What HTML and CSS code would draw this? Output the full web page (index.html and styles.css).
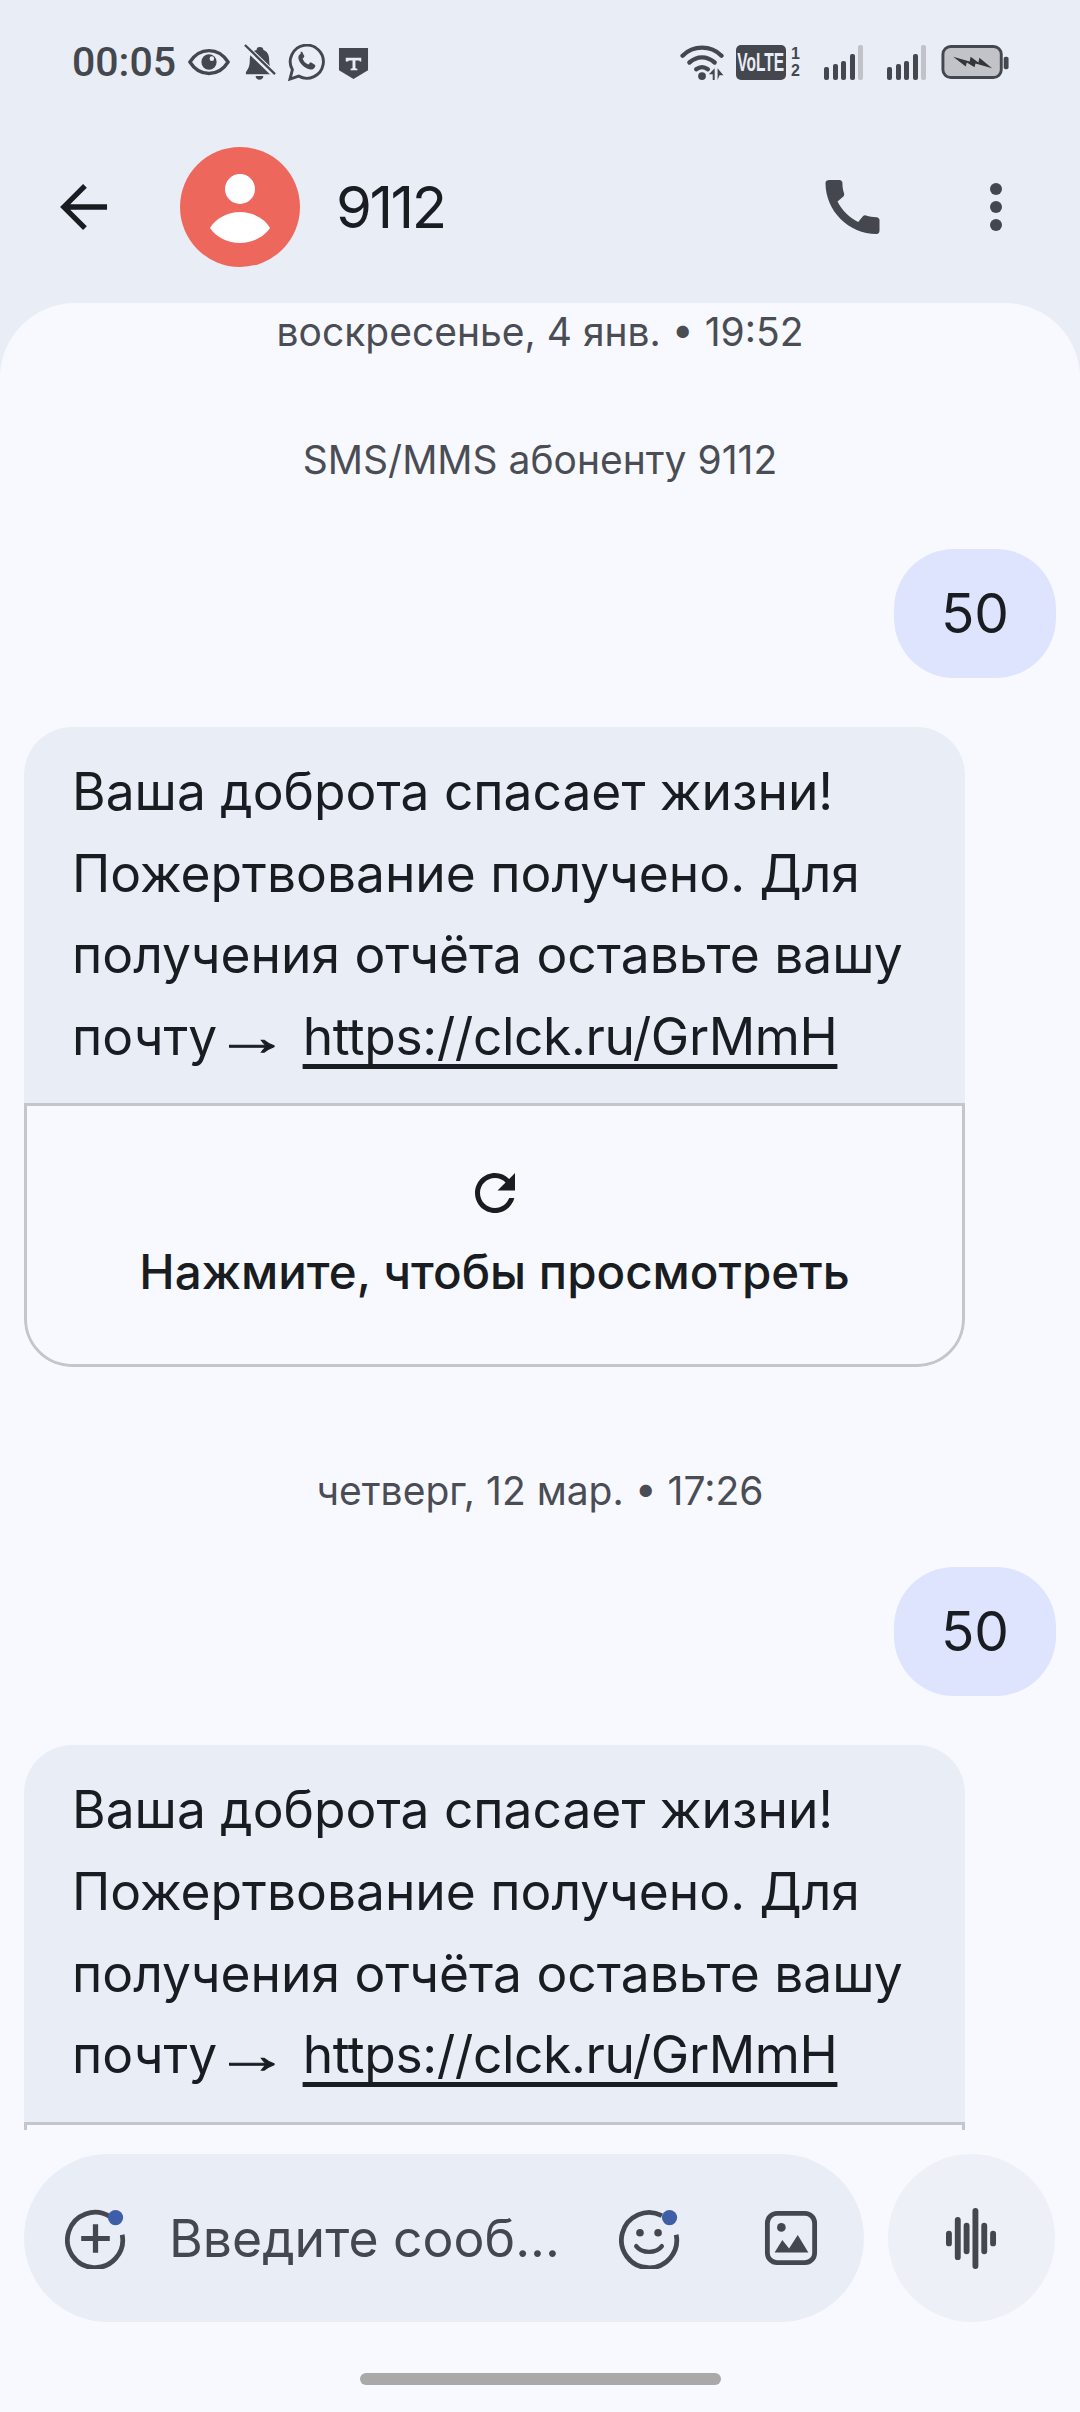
FILE: index.html
```html
<!DOCTYPE html>
<html lang="ru">
<head>
    <meta charset="UTF-8"/>
    <meta name="viewport" content="width=device-width, initial-scale=1.0"/>
    <title>9112</title>
    <link rel="stylesheet" href="styles.css">
</head>
<body>
    <div class="status">
        <span class="time">00:05</span>
        <svg class="st-eye" viewBox="0 0 44 28"><path d="M2 14C7 6 14 2 22 2s15 4 20 12c-5 8-12 12-20 12S7 22 2 14z" fill="none" stroke="#44474e" stroke-width="3.5"/><circle cx="22" cy="14" r="8" fill="#44474e"/><circle cx="25" cy="10.5" r="2.4" fill="#e9edf6"/></svg>
        <svg class="st-bell" viewBox="0 0 34 38"><path d="M17 3c-2 0-3 1-3 3C8 8 7 12 7 17c0 5-1 8-4 12v2h28v-2c-3-4-4-7-4-12 0-5-1-9-6-11 0-2-1-3-4-3z" fill="#44474e"/><path d="M13 33h8c0 5-8 5-8 0z" fill="#44474e"/><path d="M1 1l32 31" stroke="#e9edf6" stroke-width="6"/><path d="M2 1l31 30" stroke="#44474e" stroke-width="2.4"/></svg>
        <svg class="st-wa" viewBox="0 0 38 38"><path d="M2 36l2.5-9.5A17 17 0 1 1 11 33z" fill="none" stroke="#44474e" stroke-width="3"/><path d="M13 10c-2 1-3 3-2 6 1 4 6 9 11 10 3 1 5-1 6-3 0-1 0-2-1-2l-3-2c-1 0-2 0-2 1l-1 1c-3-1-5-3-6-6l1-1c1-1 1-2 0-3l-1-2c0-1-1-1-2-1z" fill="#44474e"/></svg>
        <svg class="st-shield" viewBox="0 0 32 34"><path d="M1 1h30v23L16 33 1 24z" fill="#44474e"/><path d="M8 11h16v4h-1.500l-.5-1h-4v8l2 .5V24h-7v-1.500l2-.5v-8h-4l-.5 1H8z" fill="#e9edf6"/></svg>
        <span class="status-gap"></span>
        <svg class="st-wifi" viewBox="0 0 46 36"><path d="M2 11C13 0 31 0 42 11" fill="none" stroke="#44474e" stroke-width="4.500" stroke-linecap="round"/><path d="M9 18c8-7 18-7 26 0" fill="none" stroke="#44474e" stroke-width="4.500" stroke-linecap="round"/><path d="M16 25c4-3 8-3 12 0" fill="none" stroke="#44474e" stroke-width="4.500" stroke-linecap="round"/><circle cx="22" cy="32" r="4" fill="#44474e"/><path d="M35 24v12h-2v-6h-4zM38 36V24l6 7h-4z" fill="#44474e"/></svg>
        <span class="volte"><span>VoLTE</span></span>
        <span class="sims"><span>1</span><span>2</span></span>
        <div class="signal"><i class="b1"></i><i class="b2"></i><i class="b3"></i><i class="b4"></i><i class="b5"></i></div>
        <div class="signal"><i class="b1"></i><i class="b2"></i><i class="b3"></i><i class="b4"></i><i class="b5"></i></div>
        <svg class="st-batt" viewBox="0 0 70 36"><rect x="1.500" y="1.500" width="60" height="32" rx="8" fill="#c1c3c8" stroke="#44474e" stroke-width="3"/><rect x="64" y="12" width="5" height="13" rx="2" fill="#44474e"/><path d="M12 12l17 5 1-5 8 6 1-5 13 11-17-5-1 4-8-5-1 4z" fill="#33353a"/></svg>
    </div>

    <div class="toolbar">
        <svg class="back" viewBox="0 0 50 50"><path d="M49 25H5M26 3L4 25l22 22" fill="none" stroke="#191c20" stroke-width="5.500"/></svg>
        <svg class="avatar" viewBox="0 0 120 120"><circle cx="60" cy="60" r="60" fill="#ee675c"/><circle cx="60" cy="42" r="15" fill="#fff"/><path d="M30 81c5-9 17-16 30-16s25 7 30 16c-6 9-18 15-30 15s-24-6-30-15z" fill="#fff"/></svg>
        <span class="contact">9112</span>
        <svg class="phone" viewBox="3 3 18 18"><path d="M20.01 15.38c-1.23 0-2.42-.2-3.53-.56-.35-.12-.74-.03-1.01.24l-1.57 1.97c-2.83-1.35-5.48-3.9-6.89-6.83l1.95-1.66c.27-.28.35-.67.24-1.02-.37-1.11-.56-2.3-.56-3.53 0-.54-.45-.99-.99-.99H4.19C3.65 3 3 3.24 3 3.99 3 13.28 10.73 21 20.01 21c.71 0 .99-.63.99-1.18v-3.45c0-.54-.45-.99-.99-.99z" fill="#44474e"/></svg>
        <div class="dots"><i></i><i></i><i></i></div>
    </div>

    <div class="panel">
        <div class="thread">
            <div class="stamp stamp-first">воскресенье, 4 янв. • 19:52</div>
            <div class="stamp stamp-sms">SMS/MMS абоненту 9112</div>
            <div class="sent">50</div>
            <div class="received">
                <div class="text">Ваша доброта спасает жизни! Пожертвование получено. Для получения отчёта оставьте вашу почту <span class="arrow">→</span> <u>https://clck.ru/GrMmH</u></div>
                <div class="preview">
                    <svg class="reload" viewBox="0 0 24 24"><path d="M17.65 6.35C16.2 4.9 14.21 4 12 4c-4.42 0-7.99 3.58-7.99 8s3.57 8 7.99 8c3.73 0 6.84-2.55 7.73-6h-2.08c-.82 2.33-3.04 4-5.65 4-3.31 0-6-2.69-6-6s2.69-6 6-6c1.66 0 3.14.69 4.22 1.78L13 11h7V4l-2.35 2.35z" fill="#191c20"/></svg>
                    <span>Нажмите, чтобы просмотреть</span>
                </div>
            </div>
            <div class="stamp stamp-next">четверг, 12 мар. • 17:26</div>
            <div class="sent">50</div>
            <div class="received">
                <div class="text">Ваша доброта спасает жизни! Пожертвование получено. Для получения отчёта оставьте вашу почту <span class="arrow">→</span> <u>https://clck.ru/GrMmH</u></div>
                <div class="preview">
                    <svg class="reload" viewBox="0 0 24 24"><path d="M17.65 6.35C16.2 4.9 14.21 4 12 4c-4.42 0-7.99 3.58-7.99 8s3.57 8 7.99 8c3.73 0 6.84-2.55 7.73-6h-2.08c-.82 2.33-3.04 4-5.65 4-3.31 0-6-2.69-6-6s2.69-6 6-6c1.66 0 3.14.69 4.22 1.78L13 11h7V4l-2.35 2.35z" fill="#191c20"/></svg>
                    <span>Нажмите, чтобы просмотреть</span>
                </div>
            </div>
        </div>

        <div class="composer">
            <div class="input">
                <svg class="ic-plus" viewBox="0 0 64 64"><path d="M47 9A29 29 0 1 0 60 28" fill="none" stroke="#44474e" stroke-width="5"/><path d="M32 17v30M17 32h30" stroke="#44474e" stroke-width="5.500"/><circle cx="53" cy="10" r="8" fill="#3f5ea8"/></svg>
                <span class="placeholder">Введите сооб...</span>
                <svg class="ic-smile" viewBox="0 0 64 64"><path d="M45 8A29 29 0 1 0 60 28" fill="none" stroke="#44474e" stroke-width="5"/><circle cx="22" cy="26" r="4" fill="#44474e"/><circle cx="41" cy="26" r="4" fill="#44474e"/><path d="M18 40c6 8 21 8 27 0" fill="none" stroke="#44474e" stroke-width="4.500" stroke-linecap="round"/><circle cx="53" cy="10" r="8" fill="#3f5ea8"/></svg>
                <svg class="ic-image" viewBox="0 0 54 56"><rect x="2.500" y="2.500" width="49" height="51" rx="10" fill="none" stroke="#44474e" stroke-width="5"/><circle cx="17" cy="17" r="4.500" fill="#44474e"/><path d="M10 43l8-13 7 9 9-14 11 18z" fill="#44474e"/></svg>
            </div>
            <div class="mic">
                <svg class="ic-wave" viewBox="0 0 52 62"><path d="M3 26v10M12 12v38M21 18v26M30 3v56M39 18v26M48 26v10" stroke="#44474e" stroke-width="6" stroke-linecap="round" fill="none"/></svg>
            </div>
        </div>
        <div class="home-row"><div class="home-bar"></div></div>
    </div>
</body>
</html>
```

FILE: styles.css
```css
* {
    box-sizing: border-box;
}
html, body {
    margin: 0;
    width: 1080px;
    height: 2412px;
    overflow: hidden;
}
body {
    display: flex;
    flex-direction: column;
    background-color: #e9edf6;
    font-family: Inter, "Noto Sans", sans-serif;
    color: #191c20;
}
svg {
    display: block;
    flex: none;
}

/* status bar */
.status {
    height: 126px;
    display: flex;
    align-items: center;
    padding: 0 70px 2px 72px;
}
.time {
    font-family: Roboto, sans-serif;
    font-weight: 500;
    font-size: 41px;
    color: #44474e;
    width: 116px;
}
.st-eye { width: 42px; height: 28px; }
.st-bell { width: 33px; height: 37px; margin-left: 13px; }
.st-wa { width: 37px; height: 37px; margin-left: 12px; }
.st-shield { width: 31px; height: 33px; margin-left: 13px; margin-top: 2px; }
.status-gap { flex: 1; }
.st-wifi { width: 46px; height: 35px; }
.volte {
    width: 50px;
    height: 35px;
    margin-left: 10px;
    border-radius: 5px;
    background-color: #44474e;
    color: #e9edf6;
    font-family: "Liberation Sans", sans-serif;
    font-weight: 700;
    font-size: 25px;
    line-height: 35px;
    display: flex;
    justify-content: center;
    overflow: hidden;
}
.volte span {
    display: block;
    transform: scaleX(.62);
}
.sims {
    display: flex;
    flex-direction: column;
    margin-left: 5px;
    width: 10px;
    font-family: "Liberation Sans", sans-serif;
    font-weight: 700;
    font-size: 16px;
    line-height: 17px;
    color: #44474e;
}
.signal {
    width: 40px;
    height: 35px;
    margin-left: 23px;
    display: flex;
    align-items: flex-end;
    gap: 3.6px;
}
.signal i {
    width: 5px;
    background-color: #44474e;
    border-radius: 2px;
}
.signal .b1 { height: 13px; }
.signal .b2 { height: 16px; }
.signal .b3 { height: 19px; }
.signal .b4 { height: 26px; }
.signal .b5 { height: 35px; background-color: #c1c3c8; }
.st-batt { width: 69px; height: 35px; margin-left: 14px; }

/* toolbar */
.toolbar {
    height: 177px;
    display: flex;
    align-items: center;
    padding: 0 78px 15px 60px;
}
.back { width: 48px; height: 48px; }
.avatar { width: 120px; height: 120px; margin-left: 72px; }
.contact {
    margin-left: 36px;
    font-size: 58px;
    font-weight: 400;
    letter-spacing: -2.500px;
    flex: 1;
}
.phone { width: 55px; height: 54px; }
.dots {
    margin-left: 110px;
    display: flex;
    flex-direction: column;
    gap: 6px;
}
.dots i {
    width: 12px;
    height: 12px;
    border-radius: 50%;
    background-color: #44474e;
}

/* messages */
.panel {
    flex: 1;
    min-height: 0;
    display: flex;
    flex-direction: column;
    background-color: #f8f9ff;
    border-radius: 75px 75px 0 0;
}
.thread {
    height: 1827px;
    flex: none;
    overflow: hidden;
    padding: 4px 24px 0;
    display: flex;
    flex-direction: column;
}
.stamp {
    flex: none;
    text-align: center;
    font-size: 39px;
    line-height: 50px;
    color: #4a4d54;
}
.stamp-sms { margin-top: 78px; }
.stamp-next { margin-top: 99px; }
.sent {
    flex: none;
    align-self: flex-end;
    width: 162px;
    height: 129px;
    border-radius: 60px;
    background-color: #dee4fd;
    text-align: center;
    font-size: 55px;
    line-height: 129px;
}
.stamp-sms + .sent { margin-top: 64px; }
.stamp-next + .sent { margin-top: 51px; }
.received {
    flex: none;
    width: 941px;
    margin-top: 49px;
    border-radius: 48px;
    overflow: hidden;
    background-color: #e9edf6;
}
.text {
    padding: 24px 30px 25px 48px;
    font-size: 51.500px;
    line-height: 81.600px;
}
.arrow {
    display: inline-block;
    margin: 0 11px 0 -6px;
    font-family: "Liberation Sans", sans-serif;
    -webkit-text-stroke: 1px #191c20;
    transform: scaleX(1.45);
}
.text u {
    letter-spacing: -.4px;
    text-underline-offset: 9px;
    text-decoration-thickness: 5px;
    text-decoration-skip-ink: none;
}
.preview {
    height: 264px;
    display: flex;
    flex-direction: column;
    align-items: center;
    padding-top: 57px;
    gap: 20px;
    background-color: #f8f9ff;
    border: 3px solid #c4c6cc;
    border-radius: 0 0 48px 48px;
    font-size: 47.500px;
    font-weight: 500;
}
.reload { width: 60px; height: 60px; }

/* composer */
.composer {
    height: 192px;
    flex: none;
    padding: 24px 25px 0 24px;
    display: flex;
    gap: 24px;
}
.input {
    width: 840px;
    height: 168px;
    border-radius: 84px;
    background-color: #e9edf6;
    display: flex;
    align-items: center;
    padding-left: 41px;
}
.ic-plus { width: 61px; height: 61px; }
.placeholder {
    margin-left: 43px;
    width: 394px;
    font-size: 51.700px;
    color: #44474e;
    white-space: nowrap;
}
.ic-smile { width: 61px; height: 61px; margin-left: 56px; }
.ic-image { width: 54px; height: 54px; margin-left: 84px; }
.mic {
    width: 167px;
    height: 168px;
    border-radius: 50%;
    background-color: #edf0f7;
    display: flex;
    align-items: center;
    justify-content: center;
}
.ic-wave { width: 51px; height: 61px; }
.home-row {
    flex: 1;
    display: flex;
    justify-content: center;
    padding-top: 51px;
}
.home-bar {
    width: 361px;
    height: 12px;
    border-radius: 6px;
    background-color: #a9a9a9;
}
```
